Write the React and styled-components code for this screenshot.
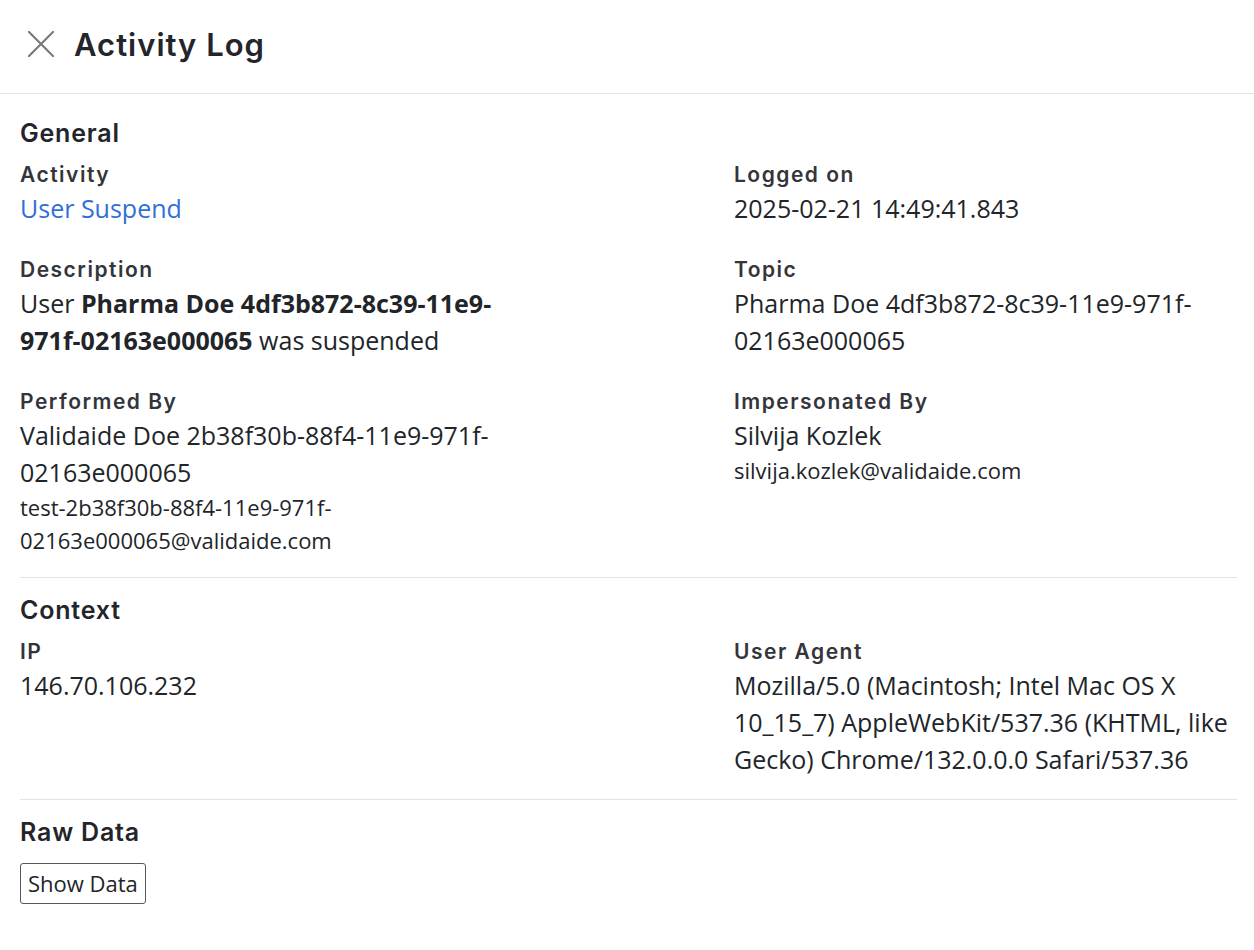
import React from 'react'
import styled, { createGlobalStyle } from 'styled-components'

const GlobalStyle = createGlobalStyle`
  body {
    margin: 0;
    background: #ffffff;
    color: #212529;
    font-family: 'Open Sans', 'Liberation Sans', sans-serif;
  }
`

const Page = styled.div`
  width: 1254px;
  min-height: 950px;
  background: #fff;
`

const Header = styled.header`
  height: 94px;
  display: flex;
  align-items: center;
  gap: 19px;
  padding: 0 0 5px 27px;
  border-bottom: 1px solid #e3e2e8;
  box-sizing: border-box;
`

const CloseButton = styled.button`
  border: none;
  background: none;
  padding: 0;
  width: 28px;
  height: 28px;
  display: flex;
  align-items: center;
  justify-content: center;
  cursor: pointer;
`

const Title = styled.h1`
  margin: 0;
  font-family: 'Inter', 'Liberation Sans', sans-serif;
  font-weight: 600;
  font-size: 31px;
  letter-spacing: 1px;
  color: #23252b;
`

const Body = styled.div`
  padding: 0 17px 0 20px;
`

const Section = styled.section`
  padding: ${(props) => (props.first ? '24px' : '17px')} 0
    ${(props) => (props.first ? '20px' : '21px')};
  border-bottom: ${(props) => (props.last ? 'none' : '1px solid #e3e2e8')};
`

const SectionTitle = styled.h2`
  margin: 0 0 15px;
  font-family: 'Inter', 'Liberation Sans', sans-serif;
  font-weight: 600;
  font-size: 25px;
  letter-spacing: 0.8px;
  line-height: 30px;
  color: #23252b;
`

const Grid = styled.div`
  display: grid;
  grid-template-columns: 503px 503px;
  justify-content: space-between;
  row-gap: 31px;
`

const Field = styled.div`
  display: flex;
  flex-direction: column;
`

const Label = styled.div`
  font-family: 'Inter', 'Liberation Sans', sans-serif;
  font-weight: 600;
  font-size: 21px;
  letter-spacing: 1.5px;
  line-height: 24px;
  color: #33353b;
  margin-bottom: 3px;
`

const Value = styled.div`
  font-size: 25px;
  line-height: 37px;
  color: ${(props) => (props.link ? '#2f6fd8' : '#212529')};
`

const SubValue = styled.div`
  font-size: 22px;
  line-height: 33px;
  color: #212529;
`

const OutlineButton = styled.button`
  margin-top: 1px;
  font-family: 'Open Sans', 'Liberation Sans', sans-serif;
  font-size: 22px;
  line-height: 29px;
  color: #212529;
  background: #fff;
  border: 1px solid #55585e;
  border-radius: 3px;
  padding: 5px 7px;
  cursor: pointer;
`

const CloseIcon = () => (
  <svg width="28" height="28" viewBox="0 0 28 28" fill="none">
    <path d="M2 2L26 26M26 2L2 26" stroke="#7a7a7a" strokeWidth="2.2" strokeLinecap="round" />
  </svg>
)

const App = () => {
  return (
    <Page>
      <GlobalStyle />
      <Header>
        <CloseButton aria-label="Close">
          <CloseIcon />
        </CloseButton>
        <Title>Activity Log</Title>
      </Header>
      <Body>
        <Section first>
          <SectionTitle>General</SectionTitle>
          <Grid>
            <Field>
              <Label>Activity</Label>
              <Value link>User Suspend</Value>
            </Field>
            <Field>
              <Label>Logged on</Label>
              <Value>2025-02-21 14:49:41.843</Value>
            </Field>
            <Field>
              <Label>Description</Label>
              <Value>
                User <b>Pharma Doe 4df3b872-8c39-11e9-971f-02163e000065</b> was suspended
              </Value>
            </Field>
            <Field>
              <Label>Topic</Label>
              <Value>Pharma Doe 4df3b872-8c39-11e9-971f-02163e000065</Value>
            </Field>
            <Field>
              <Label>Performed By</Label>
              <Value>Validaide Doe 2b38f30b-88f4-11e9-971f-02163e000065</Value>
              <SubValue>test-2b38f30b-88f4-11e9-971f-02163e000065@validaide.com</SubValue>
            </Field>
            <Field>
              <Label>Impersonated By</Label>
              <Value>Silvija Kozlek</Value>
              <SubValue>silvija.kozlek@validaide.com</SubValue>
            </Field>
          </Grid>
        </Section>
        <Section>
          <SectionTitle>Context</SectionTitle>
          <Grid>
            <Field>
              <Label>IP</Label>
              <Value>146.70.106.232</Value>
            </Field>
            <Field>
              <Label>User Agent</Label>
              <Value>
                Mozilla/5.0 (Macintosh; Intel Mac OS X 10_15_7) AppleWebKit/537.36 (KHTML, like Gecko) Chrome/132.0.0.0 Safari/537.36
              </Value>
            </Field>
          </Grid>
        </Section>
        <Section last>
          <SectionTitle>Raw Data</SectionTitle>
          <OutlineButton>Show Data</OutlineButton>
        </Section>
      </Body>
    </Page>
  )
}

export default App
